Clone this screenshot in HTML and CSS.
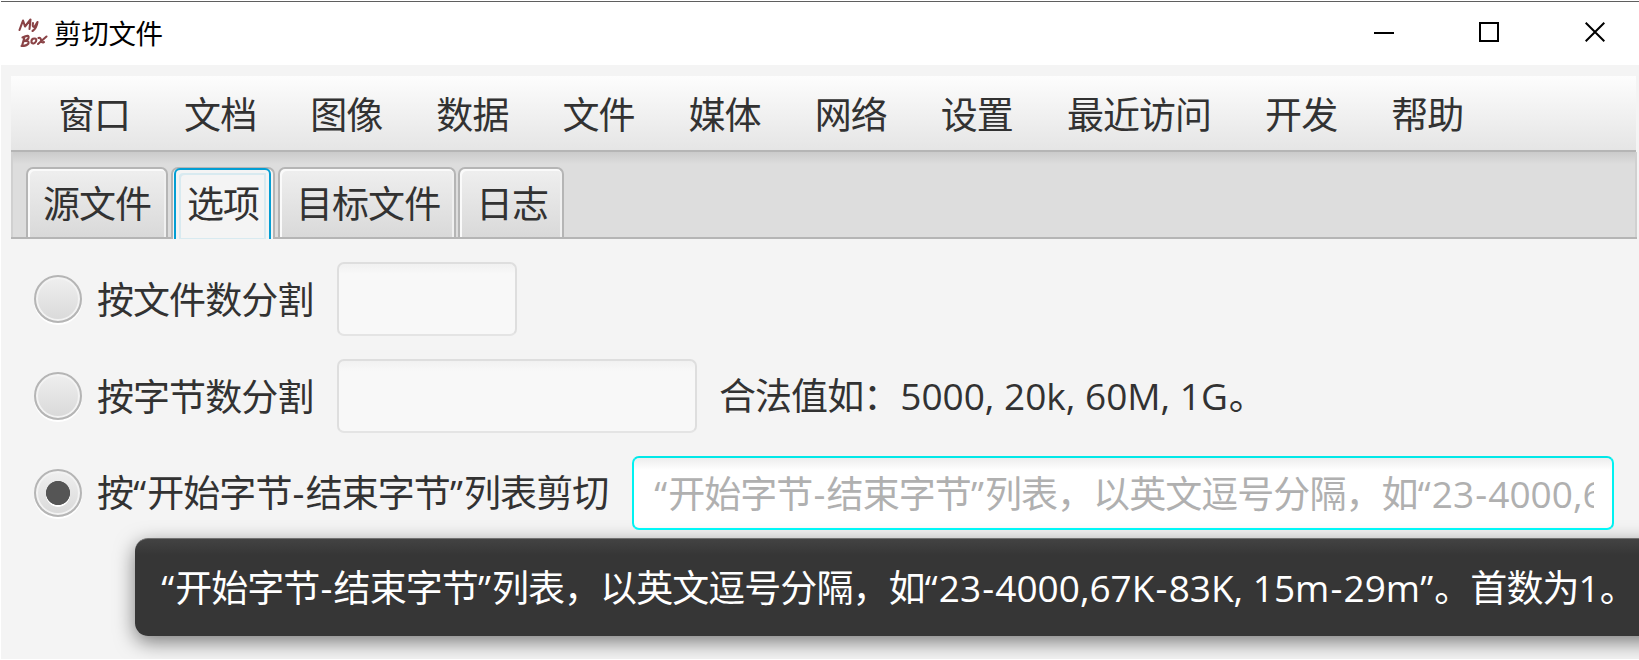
FILE: index.html
```html
<!DOCTYPE html>
<html lang="zh-CN">
<head>
<meta charset="utf-8">
<title>剪切文件</title>
<link rel="stylesheet" href="styles.css">
</head>
<body>
<div class="window">
  <header class="titlebar">
    <svg class="logo" viewBox="0 0 32 32" width="32" height="32">
      <g fill="none" stroke="#8a4346" stroke-width="2.1" stroke-linecap="round" stroke-linejoin="round">
        <path d="M3.500 14 L7 4.500 L9 10.500 L14.500 3.500 L13.500 13"/>
        <path d="M17 7 Q16 11.500 18.500 10.800 L21.500 6 M21.500 6 Q20.500 12.500 16.500 15"/>
        <path d="M8.500 21 L6 30 M6.500 21.500 Q13.500 18 12.500 22 Q11.500 24.500 8 25.200 Q13.500 24.500 12.500 27.500 Q10.500 30 5.500 30"/>
        <path d="M18.500 22.500 Q15 22.500 15.500 26.500 Q17.500 29 20 25.500 Q21 22.500 18.500 22.500"/>
        <path d="M22.500 22 Q24.500 21 25 24 Q25.500 27.500 28 26 M30.500 20.500 L22 28"/>
      </g>
    </svg>
    <h1 class="title">剪切文件</h1>
    <div class="controls">
      <svg viewBox="0 0 20 20"><path d="M0 11H20" /></svg>
      <svg viewBox="0 0 20 20"><path d="M1 1H19V19H1Z" /></svg>
      <svg viewBox="0 0 20 20"><path d="M.7 .7L19.3 19.3M19.3 .7L.7 19.3" /></svg>
    </div>
  </header>
  <nav class="menubar">
    <span>窗口</span><span>文档</span><span>图像</span><span>数据</span><span>文件</span><span>媒体</span><span>网络</span><span>设置</span><span>最近访问</span><span>开发</span><span>帮助</span>
  </nav>
  <div class="tabs">
    <div class="tab">源文件</div>
    <div class="tab selected"><div class="focus">选项</div></div>
    <div class="tab">目标文件</div>
    <div class="tab last">日志</div>
  </div>
  <main class="options">
    <div class="row">
      <i class="radio"></i><label>按文件数分割</label><div class="field short"></div>
    </div>
    <div class="row">
      <i class="radio"></i><label>按字节数分割</label><div class="field medium"></div>
      <span class="hint">合法值如：<span class="lat num">5000, 20k, 60M, 1G</span>。</span>
    </div>
    <div class="row">
      <i class="radio checked"></i><label>按<span class="q">“</span>开始字节<span class="h">-</span>结束字节<span class="q">”</span>列表剪切</label>
      <div class="field active"><div class="placeholder"><span class="q">“</span>开始字节<span class="h">-</span>结束字节<span class="q">”</span>列表，以英文逗号分隔，如<span class="q">“</span><span class="lat">23<span class="h">-</span>4000,67K<span class="h">-</span>83K, 15m<span class="h">-</span>29m</span></div></div>
    </div>
  </main>
  <div class="tooltip"><span class="q">“</span>开始字节<span class="h">-</span>结束字节<span class="q">”</span>列表，以英文逗号分隔，如<span class="q">“</span><span class="lat">23<span class="h">-</span>4000,67K<span class="h">-</span>83K, 15m<span class="h">-</span>29m</span><span class="q">”</span>。首数为<span class="lat">1</span>。</div>
</div>
</body>
</html>
```
FILE: styles.css
```css
* { box-sizing: border-box; }
body {
  margin: 0;
  overflow: hidden;
  font-family: "Noto Sans CJK SC", sans-serif;
  font-size: 37px;
  letter-spacing: -.95px;
  line-height: 1;
  color: #323232;
}
.window {
  position: relative;
  width: 1639px;
  height: 660px;
  background: #f4f4f4;
  border-left: 1px solid #fff;
  border-bottom: 1px solid #fff;
  overflow: hidden;
}
.titlebar {
  display: flex;
  height: 65px;
  padding-left: 15px;
  background: #fff;
  border-top: 1px solid #fff;
  box-shadow: inset 0 1px #5f5f5f;
  color: #000;
}
.logo { margin-top: 15px; }
.title { margin: 17px 0 0 6px; font-size: 27.5px; font-weight: 400; letter-spacing: -.3px; line-height: 29px; }
.controls { display: flex; gap: 85px; margin: 21px 34px 0 auto; }
.controls svg { width: 20px; height: 20px; fill: none; stroke: #000; stroke-width: 2; }
.controls svg:last-child { margin-left: 1px; }
.menubar {
  display: flex;
  height: 76px;
  margin: 11px 3px 0 10px;
  padding-left: 20px;
  background: linear-gradient(#fdfdfd, #e5e5e5);
  border-bottom: 2px solid #b5b5b5;
}
.menubar span { padding: 19px 27px 0; }
.tabs {
  display: flex;
  height: 87px;
  margin: 0 2px 0 10px;
  padding: 15px 0 0 15px;
  background: linear-gradient(#cbcbcb, #ddd 12px);
  border-bottom: 2px solid #b5b5b5;
  box-shadow: inset 2px 0 #d0d0d0, inset -2px 0 #d0d0d0;
}
.tab {
  width: 142px;
  height: 70px;
  margin-right: 3px;
  padding: 15px 0 0 15px;
  border: 2px solid #b5b5b5;
  border-bottom: 0;
  border-radius: 7px 7px 0 0;
  background: linear-gradient(#efefef, #d9d9d9);
  box-shadow: inset 2px 2px #fafafa, inset -2px 0 #f0f0f0;
  white-space: nowrap;
}
.tab:nth-child(3) { width: 178px; margin-right: 2px; padding-left: 16px; }
.tab.last { width: 106px; padding-left: 16px; }
.tab.selected { width: 104px; height: 72px; padding: 0 2px 0 1px; background: #f4f4f4; box-shadow: none; }
.focus {
  height: 71px;
  margin-top: -1px;
  padding: 14px 0 0 11px;
  border: 2px solid #039ed3;
  border-bottom: 0;
  border-radius: 6px 6px 0 0;
  background: #f4f4f4;
  box-shadow: inset 3px 3px #f4f4f4, inset -3px 0 #f4f4f4, inset 5px 5px #d8eaf0, inset -5px -1px #d8eaf0;
}
.options { display: flex; flex-direction: column; gap: 23px; padding: 23px 0 0 33px; }
.row { display: flex; align-items: center; height: 74px; white-space: nowrap; }
.radio {
  width: 48px;
  height: 48px;
  border: 2px solid #b5b5b5;
  border-radius: 50%;
  background: linear-gradient(#efefef, #d9d9d9);
  box-shadow: inset 0 0 0 2px #f3f3f3, 0 2px #fff;
}
.radio.checked {
  background: radial-gradient(circle at 50% 50%, #555 11.7px, transparent 12.4px), radial-gradient(circle at 50% 54%, #fff 11.7px, transparent 12.4px), linear-gradient(#efefef, #d9d9d9);
}
label { width: 216px; margin: 0 24px 0 15px; padding-bottom: 2px; }
.checked + label { width: 511px; }
.field {
  height: 74px;
  border: 2px solid #dedede;
  border-bottom-color: #e4e4e4;
  border-radius: 7px;
  background: linear-gradient(#f1f1f1, #f8f8f8 10px);
}
.short { width: 180px; }
.medium { width: 360px; }
.active {
  width: 982px;
  padding: 11px 18px 0 20px;
  border-color: #00e8e8 #00f2f2 #0ff;
  background: linear-gradient(#ededed, #fff 12px);
}
.placeholder { height: 50px; line-height: 47px; overflow: hidden; color: #b0b0b0; }
.hint { margin-left: 22px; padding-bottom: 2px; }
.lat { font-family: "Open Sans", sans-serif; letter-spacing: 0; }
.num { margin: 0 1px; }
.q, .h { display: inline-block; width: 14.2px; text-align: center; font-family: "Open Sans", sans-serif; letter-spacing: 0; }
.q { text-indent: -1px; }
.tooltip {
  position: absolute;
  left: 134px;
  top: 538px;
  width: 1560px;
  height: 98px;
  padding: 29px 0 0 26px;
  border-radius: 13px;
  background: linear-gradient(#434343, #363636 16px, #363636);
  border-top: 1px solid #707070;
  box-shadow: 0 6px 20px rgba(0,0,0,.5);
  color: #fff;
  white-space: nowrap;
}
```
